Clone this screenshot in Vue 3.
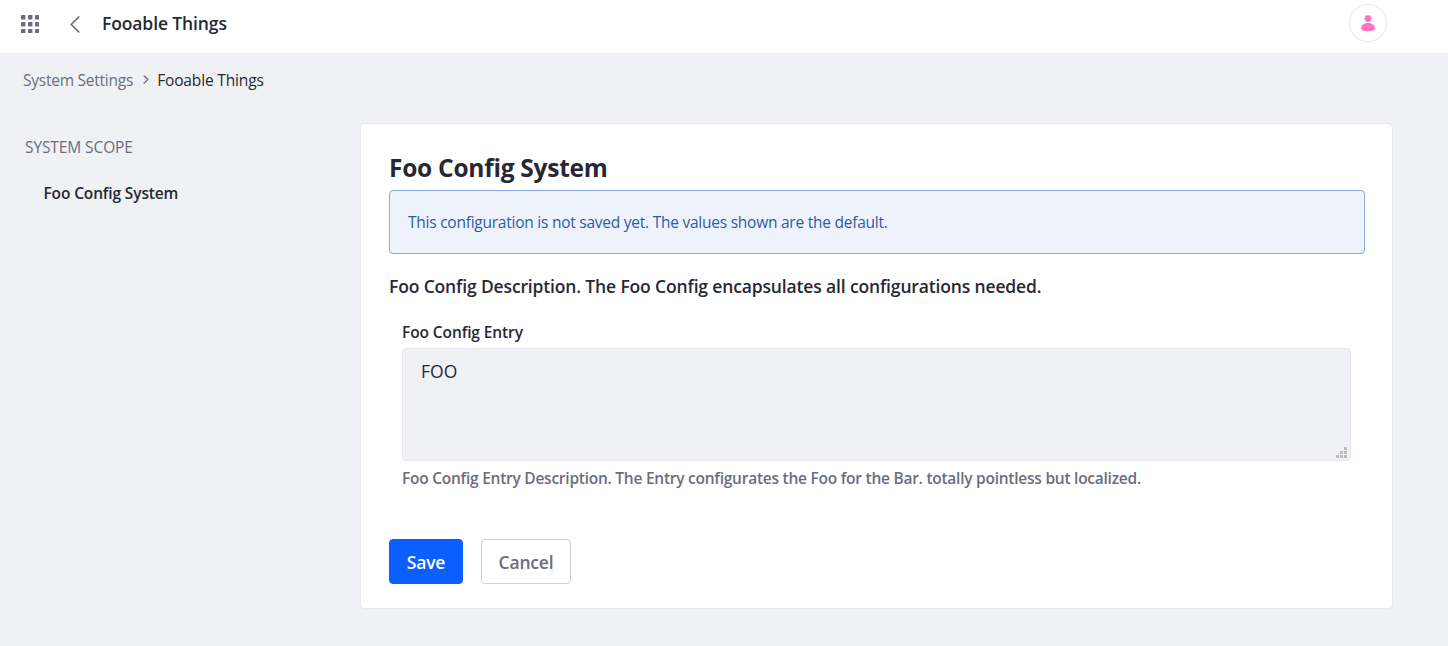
<script setup>
import { ref } from 'vue'

const entry = ref('FOO')
const dots = [0, 7, 14]
const grip = [[8, 0], [4, 4], [8, 4], [0, 8], [4, 8], [8, 8]]
</script>

<template>
  <div class="page">
    <header class="topbar">
      <svg class="apps" width="18" height="18" viewBox="0 0 18 18" fill="#6b6c7e">
        <template v-for="y in dots" :key="y">
          <rect v-for="x in dots" :key="x" :x="x" :y="y" width="4.4" height="4.4" rx="0.4" />
        </template>
      </svg>
      <svg class="back" width="10" height="17" viewBox="0 0 10 17" fill="none" stroke="#6b6c7e" stroke-width="1.7" stroke-linecap="round" stroke-linejoin="round">
        <path d="M8.8 1 1.2 8.5 8.8 16" />
      </svg>
      <h1 class="title">Fooable Things</h1>
      <div class="avatar">
        <svg width="14" height="17" viewBox="0 0 14 17" fill="#ff73c3">
          <circle cx="7" cy="3.6" r="3.4" />
          <path d="M7 8.1c4.4 0 6.9 2.5 6.9 5.2C13.9 15.6 11 16.3 7 16.3S.1 15.6.1 13.3C.1 10.600 2.600 8.100 7 8.100Z" />
        </svg>
      </div>
    </header>

    <nav class="crumbs">
      <a class="parent">System Settings</a>
      <svg width="6" height="9" viewBox="0 0 6 9" fill="none" stroke="#6b6c7e" stroke-width="1.2" stroke-linecap="round" stroke-linejoin="round">
        <path d="M1 .8 4.900 4.500 1 8.200" />
      </svg>
      <span class="current">Fooable Things</span>
    </nav>

    <div class="content">
      <aside class="side">
        <div class="scope">SYSTEM SCOPE</div>
        <a class="item">Foo Config System</a>
      </aside>

      <main class="sheet">
        <h2 class="heading">Foo Config System</h2>
        <div class="alert">This configuration is not saved yet. The values shown are the default.</div>
        <p class="desc">Foo Config Description. The Foo Config encapsulates all configurations needed.</p>
        <div class="group">
          <label class="label" for="entry">Foo Config Entry</label>
          <div class="field">
            <textarea id="entry" v-model="entry" spellcheck="false"></textarea>
            <svg class="grip" width="11" height="11" viewBox="0 0 11 11" fill="#bbbbbd" shape-rendering="crispEdges">
              <rect v-for="[x, y] in grip" :key="x + '-' + y" :x="x" :y="y" width="3" height="3" />
            </svg>
          </div>
          <p class="help">Foo Config Entry Description. The Entry configurates the Foo for the Bar. totally pointless but localized.</p>
        </div>
        <div class="actions">
          <button class="btn save">Save</button>
          <button class="btn cancel">Cancel</button>
        </div>
      </main>
    </div>
  </div>
</template>

<style>
body {
  margin: 0;
  background: #f0f1f5;
}
</style>

<style scoped>
.page {
  height: 646px;
  overflow: hidden;
  background: #f0f1f5;
  color: #272833;
  font-family: "Segoe UI", "Open Sans", "Noto Sans", sans-serif;
  font-size: 15.5px;
  line-height: 24px;
  white-space: nowrap;
}
h1, h2, p { margin: 0; }
.topbar {
  display: flex;
  align-items: center;
  box-sizing: border-box;
  height: 53px;
  padding: 0 61px 7px 21px;
  background: #fff;
}
.apps { margin-top: 2px; }
.back { margin: 3px 0 0 31px; }
.title { margin: 0 0 0 22px; font-size: 17.5px; font-weight: 600; letter-spacing: -0.12px; }
.avatar {
  display: flex;
  align-items: center;
  justify-content: center;
  box-sizing: border-box;
  width: 38px;
  height: 38px;
  margin-left: auto;
  border: 1px solid #e7e7ed;
  border-radius: 50%;
}
.crumbs {
  display: flex;
  align-items: center;
  height: 24px;
  padding: 15px 0 1px 23px;
}
.crumbs svg { margin: 0 8px 1px 10px; }
.parent { color: #6b6c7e; letter-spacing: -0.24px; }
.current { letter-spacing: -0.15px; }
.content { display: flex; padding: 30px 55px 0 0; }
.side { width: 360px; flex: none; }
.scope { margin: 12px 0 0 25px; color: #6b6c7e; letter-spacing: -0.1px; }
.item { display: block; margin: 22px 0 0 43.5px; font-weight: 600; letter-spacing: -0.14px; }
.sheet {
  flex: 1;
  box-sizing: border-box;
  height: 486px;
  padding: 27px;
  padding-left: 28px;
  background: #fff;
  border: 1px solid #e7e7ed;
  border-radius: 5px;
}
.heading { height: 39px; font-size: 24.5px; font-weight: 700; line-height: 34px; letter-spacing: -0.26px; }
.alert {
  display: flex;
  align-items: center;
  box-sizing: border-box;
  height: 64px;
  padding: 0 18px;
  background: #eef2fa;
  border: 1px solid #89a7e0;
  border-radius: 4px;
  color: #2e5aac;
  letter-spacing: -0.243px;
}
.desc { margin-top: 20px; font-size: 17.5px; font-weight: 600; letter-spacing: -0.15px; }
.group { padding: 22px 14px 0 13px; }
.label { display: block; height: 28px; font-weight: 600; letter-spacing: -0.1px; }
.field { position: relative; height: 113px; }
textarea {
  display: block;
  box-sizing: border-box;
  width: 100%;
  height: 113px;
  margin: 0;
  padding: 10px 18px;
  background: #f0f1f5;
  border: 1px solid #e7e7ed;
  border-radius: 4px;
  outline: none;
  resize: none;
  color: #272833;
  font: 17.5px/24px "Segoe UI", "Open Sans", "Noto Sans", sans-serif;
}
.grip { position: absolute; right: 4px; bottom: 3px; }
.help { margin-top: 5px; color: #6b6c7e; font-weight: 600; letter-spacing: -0.247px; }
.actions { display: flex; gap: 18px; margin-top: 49px; }
.btn {
  box-sizing: border-box;
  height: 45px;
  padding: 0;
  border-radius: 4px;
  font: 600 17.5px/24px "Segoe UI", "Open Sans", "Noto Sans", sans-serif;
  letter-spacing: -0.2px;
}
.save { width: 74px; background: #0b5fff; border: 1px solid #0b5fff; color: #fff; }
.cancel { width: 90px; background: #fff; border: 1px solid #cdced9; color: #6b6c7e; }
</style>
